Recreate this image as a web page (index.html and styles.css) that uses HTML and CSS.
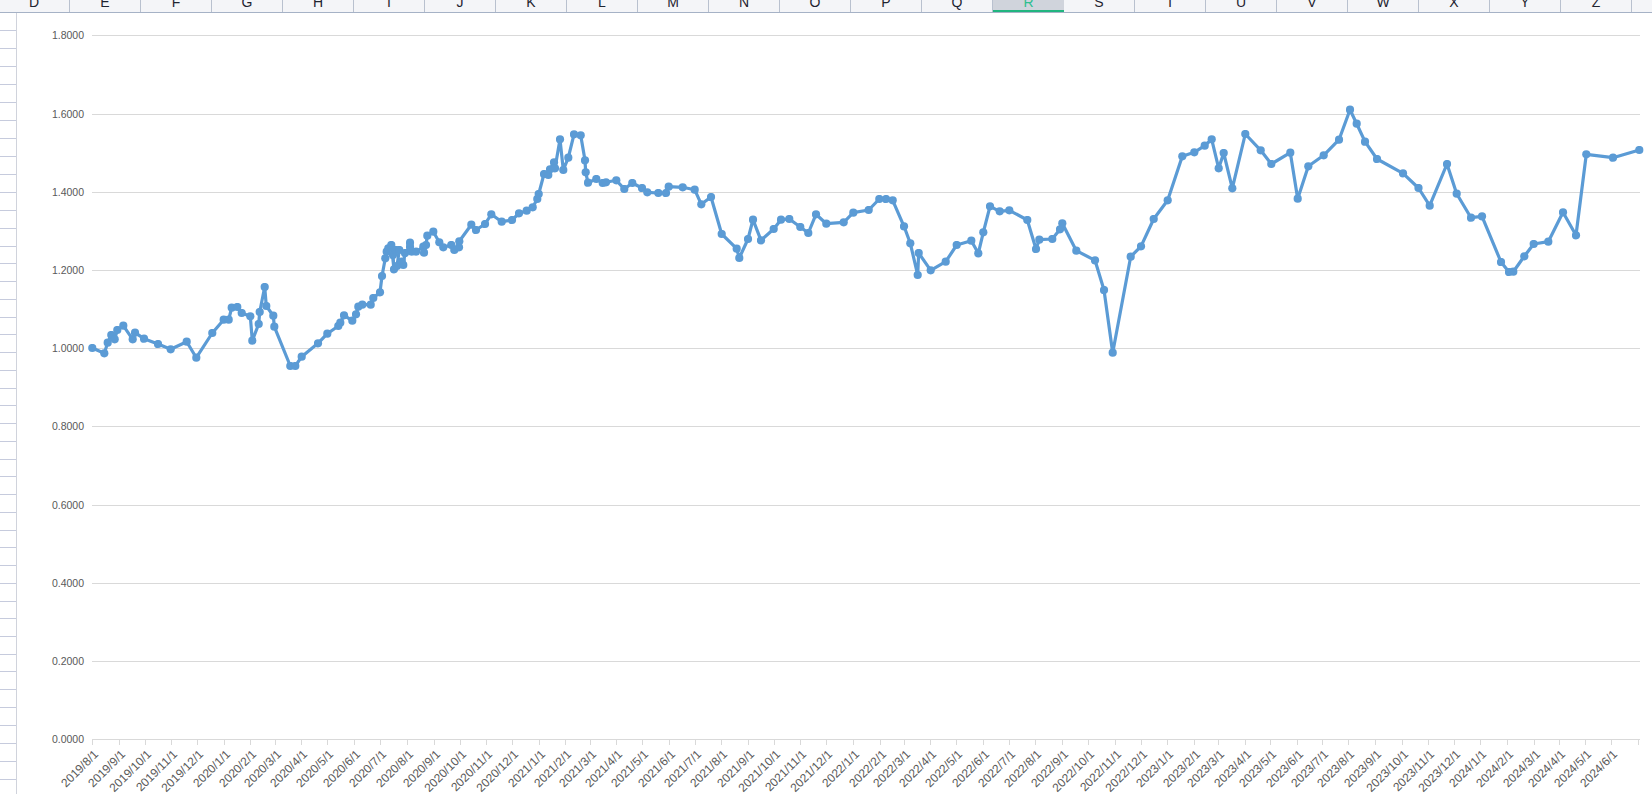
FILE: index.html
```html
<!DOCTYPE html>
<html lang="en">
<head>
<meta charset="utf-8">
<title>Chart sheet</title>
<link rel="stylesheet" href="styles.css">
</head>
<body>
<div class="sheet">
  <header class="cols">
    <div class="col">D</div><div class="col">E</div><div class="col">F</div><div class="col">G</div><div class="col">H</div><div class="col">I</div><div class="col">J</div><div class="col">K</div><div class="col">L</div><div class="col">M</div><div class="col">N</div><div class="col">O</div><div class="col">P</div><div class="col">Q</div><div class="col col-active">R</div><div class="col">S</div><div class="col">T</div><div class="col">U</div><div class="col">V</div><div class="col">W</div><div class="col">X</div><div class="col">Y</div><div class="col">Z</div>
  </header>
  <main class="body">
    <aside class="rows">
      <div class="row"></div><div class="row"></div><div class="row"></div><div class="row"></div><div class="row"></div><div class="row"></div><div class="row"></div><div class="row"></div><div class="row"></div><div class="row"></div>
      <div class="row"></div><div class="row"></div><div class="row"></div><div class="row short"></div><div class="row"></div><div class="row"></div><div class="row"></div><div class="row short"></div><div class="row"></div><div class="row"></div>
      <div class="row"></div><div class="row short"></div><div class="row"></div><div class="row"></div><div class="row"></div><div class="row short"></div><div class="row"></div><div class="row"></div><div class="row"></div><div class="row short"></div>
      <div class="row"></div><div class="row"></div><div class="row"></div><div class="row short"></div><div class="row"></div><div class="row"></div><div class="row short"></div><div class="row"></div><div class="row"></div><div class="row"></div>
      <div class="row"></div><div class="row"></div><div class="row"></div><div class="row"></div>
    </aside>
    <svg class="chart" width="1635" height="781" viewBox="17 13 1635 781" xmlns="http://www.w3.org/2000/svg">
      <defs>
        <marker id="dot" markerUnits="userSpaceOnUse" markerWidth="9" markerHeight="9" viewBox="0 0 9 9" refX="4.5" refY="4.5">
          <circle class="dot" cx="4.5" cy="4.5" r="4.1"/>
        </marker>
      </defs>
      <path class="grid" d="M92 35.5H1640M92 114.5H1640M92 192.5H1640M92 270.5H1640M92 348.5H1640M92 426.5H1640M92 505.5H1640M92 583.5H1640M92 661.5H1640M92 739.5H1640"/>
      <path class="grid" d="M92.5 740v5M119.5 740v5M145.5 740v5M171.5 740v5M197.5 740v5M224.5 740v5M250.5 740v5M275.5 740v5M301.5 740v5M327.5 740v5M354.5 740v5M380.5 740v5M407.5 740v5M434.5 740v5M460.5 740v5M486.5 740v5M512.5 740v5M539.5 740v5M565.5 740v5M590.5 740v5M616.5 740v5M642.5 740v5M669.5 740v5M695.5 740v5M721.5 740v5M748.5 740v5M774.5 740v5M800.5 740v5M826.5 740v5M853.5 740v5M880.5 740v5M904.5 740v5M930.5 740v5M956.5 740v5M983.5 740v5M1009.5 740v5M1035.5 740v5M1062.5 740v5M1088.5 740v5M1115.5 740v5M1141.5 740v5M1167.5 740v5M1194.5 740v5M1218.5 740v5M1245.5 740v5M1270.5 740v5M1297.5 740v5M1322.5 740v5M1348.5 740v5M1375.5 740v5M1402.5 740v5M1428.5 740v5M1454.5 740v5M1480.5 740v5M1507.5 740v5M1534.5 740v5M1559.5 740v5M1585.5 740v5M1611.5 740v5M1638.5 740v5"/>
      <g class="ylabels">
        <text x="84" y="39">1.8000</text>
        <text x="84" y="118">1.6000</text>
        <text x="84" y="196">1.4000</text>
        <text x="84" y="274">1.2000</text>
        <text x="84" y="352">1.0000</text>
        <text x="84" y="430">0.8000</text>
        <text x="84" y="509">0.6000</text>
        <text x="84" y="587">0.4000</text>
        <text x="84" y="665">0.2000</text>
        <text x="84" y="743">0.0000</text>
      </g>
      <g class="xlabels">
        <text transform="translate(99 755) rotate(-45)">2019/8/1</text>
        <text transform="translate(126 755) rotate(-45)">2019/9/1</text>
        <text transform="translate(152 755) rotate(-45)">2019/10/1</text>
        <text transform="translate(178 755) rotate(-45)">2019/11/1</text>
        <text transform="translate(204 755) rotate(-45)">2019/12/1</text>
        <text transform="translate(231 755) rotate(-45)">2020/1/1</text>
        <text transform="translate(257 755) rotate(-45)">2020/2/1</text>
        <text transform="translate(282 755) rotate(-45)">2020/3/1</text>
        <text transform="translate(308 755) rotate(-45)">2020/4/1</text>
        <text transform="translate(334 755) rotate(-45)">2020/5/1</text>
        <text transform="translate(361 755) rotate(-45)">2020/6/1</text>
        <text transform="translate(387 755) rotate(-45)">2020/7/1</text>
        <text transform="translate(414 755) rotate(-45)">2020/8/1</text>
        <text transform="translate(441 755) rotate(-45)">2020/9/1</text>
        <text transform="translate(467 755) rotate(-45)">2020/10/1</text>
        <text transform="translate(493 755) rotate(-45)">2020/11/1</text>
        <text transform="translate(519 755) rotate(-45)">2020/12/1</text>
        <text transform="translate(546 755) rotate(-45)">2021/1/1</text>
        <text transform="translate(572 755) rotate(-45)">2021/2/1</text>
        <text transform="translate(597 755) rotate(-45)">2021/3/1</text>
        <text transform="translate(623 755) rotate(-45)">2021/4/1</text>
        <text transform="translate(649 755) rotate(-45)">2021/5/1</text>
        <text transform="translate(676 755) rotate(-45)">2021/6/1</text>
        <text transform="translate(702 755) rotate(-45)">2021/7/1</text>
        <text transform="translate(728 755) rotate(-45)">2021/8/1</text>
        <text transform="translate(755 755) rotate(-45)">2021/9/1</text>
        <text transform="translate(781 755) rotate(-45)">2021/10/1</text>
        <text transform="translate(807 755) rotate(-45)">2021/11/1</text>
        <text transform="translate(833 755) rotate(-45)">2021/12/1</text>
        <text transform="translate(860 755) rotate(-45)">2022/1/1</text>
        <text transform="translate(887 755) rotate(-45)">2022/2/1</text>
        <text transform="translate(911 755) rotate(-45)">2022/3/1</text>
        <text transform="translate(937 755) rotate(-45)">2022/4/1</text>
        <text transform="translate(963 755) rotate(-45)">2022/5/1</text>
        <text transform="translate(990 755) rotate(-45)">2022/6/1</text>
        <text transform="translate(1016 755) rotate(-45)">2022/7/1</text>
        <text transform="translate(1042 755) rotate(-45)">2022/8/1</text>
        <text transform="translate(1069 755) rotate(-45)">2022/9/1</text>
        <text transform="translate(1095 755) rotate(-45)">2022/10/1</text>
        <text transform="translate(1122 755) rotate(-45)">2022/11/1</text>
        <text transform="translate(1148 755) rotate(-45)">2022/12/1</text>
        <text transform="translate(1174 755) rotate(-45)">2023/1/1</text>
        <text transform="translate(1201 755) rotate(-45)">2023/2/1</text>
        <text transform="translate(1225 755) rotate(-45)">2023/3/1</text>
        <text transform="translate(1252 755) rotate(-45)">2023/4/1</text>
        <text transform="translate(1277 755) rotate(-45)">2023/5/1</text>
        <text transform="translate(1304 755) rotate(-45)">2023/6/1</text>
        <text transform="translate(1329 755) rotate(-45)">2023/7/1</text>
        <text transform="translate(1355 755) rotate(-45)">2023/8/1</text>
        <text transform="translate(1382 755) rotate(-45)">2023/9/1</text>
        <text transform="translate(1409 755) rotate(-45)">2023/10/1</text>
        <text transform="translate(1435 755) rotate(-45)">2023/11/1</text>
        <text transform="translate(1461 755) rotate(-45)">2023/12/1</text>
        <text transform="translate(1487 755) rotate(-45)">2024/1/1</text>
        <text transform="translate(1514 755) rotate(-45)">2024/2/1</text>
        <text transform="translate(1541 755) rotate(-45)">2024/3/1</text>
        <text transform="translate(1566 755) rotate(-45)">2024/4/1</text>
        <text transform="translate(1592 755) rotate(-45)">2024/5/1</text>
        <text transform="translate(1618 755) rotate(-45)">2024/6/1</text>
      </g>
      <polyline class="series" points="92.3,348 104.3,353.3 107.7,342.7 111.3,335 114.7,339.3 117.3,330 123.3,325.7 132.7,339.3 135,332.7 144,338.7 158,344 170.7,349.3 186.7,341.7 196.3,357.7 212.3,333 223.7,319.7 228.7,319.7 231.7,307.7 237.3,307 241.7,313 250.3,316.3 252.3,340.7 258.7,324 259.7,312 264.7,287 266.3,306 273.3,315.7 274.3,326.7 290.3,366 295.3,366 301.7,356.7 318,343.3 327.3,333.7 338.3,326 340.3,322.7 344,315.3 352.3,320.7 356,314.3 358.3,306.7 362.3,304.7 370.7,304.7 373.3,298 380,292.3 382,276 385.3,258.3 386.7,251.7 388.3,248.3 391.3,245 394,269.3 393,255 396,250 399.3,250 397,266 401.7,261.7 403.3,265 405,253 410,246.7 410,242.7 411.7,251.7 416,251.7 423.3,246.7 424,252.7 426,245 427.3,235.7 433.3,231.7 439.3,242.3 443.3,247.3 451.3,245 454.3,250 459,247.3 459.3,241.3 471.3,224.7 476,230 485,224 491.3,214.3 501.7,221.7 512,220 519,213.3 526.7,210.7 532.7,207.3 537.3,199 538.7,194 544,174 548.3,175 550,169.3 554,162.3 555,168.3 560,139.3 563.3,170 568.3,157.7 574,134.3 580.7,135.3 585,160.3 585.7,172.3 588,182.7 596.3,179 602.7,183 606,182.3 616.3,180.3 624.3,189 632.3,183 642,188 647.3,192.3 658.3,193 666,193 668.7,186.7 682.7,187.3 694.7,189.7 701.3,204.3 711,197 721.7,234 736.7,248.7 739.3,258 748,239 753,219.7 761,240.3 773.7,229 781,219.7 789.3,219 800.3,227 808.3,233 816,214.3 826.3,223.7 843.7,222.3 853.3,212.7 868.7,210 879.3,199 886,199 892.7,200.3 904,226.3 910.3,243.3 917.7,275 918.7,253 930.7,270.3 945.7,261.7 956.7,245 971.3,240.7 978.3,253.3 983.3,232.3 990,206.3 999.7,211.3 1009.3,210.3 1027.3,220 1036,249 1039.3,239.7 1052.3,239 1060,229.3 1062.3,223.3 1076.3,250.7 1095,260.3 1104,290 1112.7,352.7 1130.7,256.7 1141,246.3 1153.7,219 1167.7,200.3 1182.3,156.3 1194.3,152.3 1204.7,145.7 1211.7,139.3 1218.7,168.3 1223.7,153 1232.3,188.3 1245.3,134 1260.7,150.3 1271.3,164 1290.3,152.7 1297.7,198.7 1308.3,166.3 1323.7,155.3 1339,139.7 1350,109.7 1356.7,123.7 1365,141.7 1377,159 1403,173.3 1418.5,188 1429.7,205.7 1447,164 1456.7,193.7 1471,217.7 1482,216.3 1501,262 1509,272 1513.3,271.7 1524.3,256.3 1533.7,244 1548.3,241.7 1563,212.3 1576,235.3 1586.3,154.3 1613,157.7 1639.3,150"/>
    </svg>
  </main>
</div>
</body>
</html>
```
FILE: styles.css
```css
html, body {
  margin: 0;
  height: 794px;
  overflow: hidden;
  background: #fff;
}

.sheet {
  display: flex;
  flex-direction: column;
  height: 794px;
  font-family: "Liberation Sans", Arial, sans-serif;
}

.cols {
  display: flex;
  flex: none;
  height: 12px;
  margin-left: -1px;
  overflow: hidden;
  background: #f4f5f8;
  border-bottom: 1px solid #a6b2c6;
}

.col {
  flex: none;
  box-sizing: border-box;
  width: 71px;
  height: 12px;
  border-right: 1px solid #b9c1cf;
  font-size: 14px;
  line-height: 4px;
  text-align: center;
  color: #1f2430;
  overflow: hidden;
}

.col-active {
  background: #d0d4dc;
  border-right: 0;
  border-bottom: 2px solid #21b57f;
  color: #2fbf8f;
}

.body {
  display: flex;
  flex: 1;
  min-height: 0;
}

.rows {
  display: flex;
  flex-direction: column;
  flex: none;
  width: 16px;
  overflow: hidden;
  border-right: 1px solid #d0d3dc;
}

.row {
  flex: none;
  box-sizing: border-box;
  height: 18px;
  border-bottom: 1px solid #c6cbdd;
}

.row.short {
  height: 17px;
}

.chart {
  display: block;
  flex: none;
}

.grid {
  fill: none;
  stroke: #d9d9d9;
  stroke-width: 1;
}

.ylabels text {
  font-size: 10.5px;
  fill: #595959;
  text-anchor: end;
}

.xlabels text {
  font-size: 12px;
  fill: #595959;
  text-anchor: end;
}

.series {
  fill: none;
  stroke: #5b9bd5;
  stroke-width: 3.2;
  stroke-linejoin: round;
  stroke-linecap: round;
  marker: url(#dot);
}

.dot {
  fill: #5b9bd5;
}
```
